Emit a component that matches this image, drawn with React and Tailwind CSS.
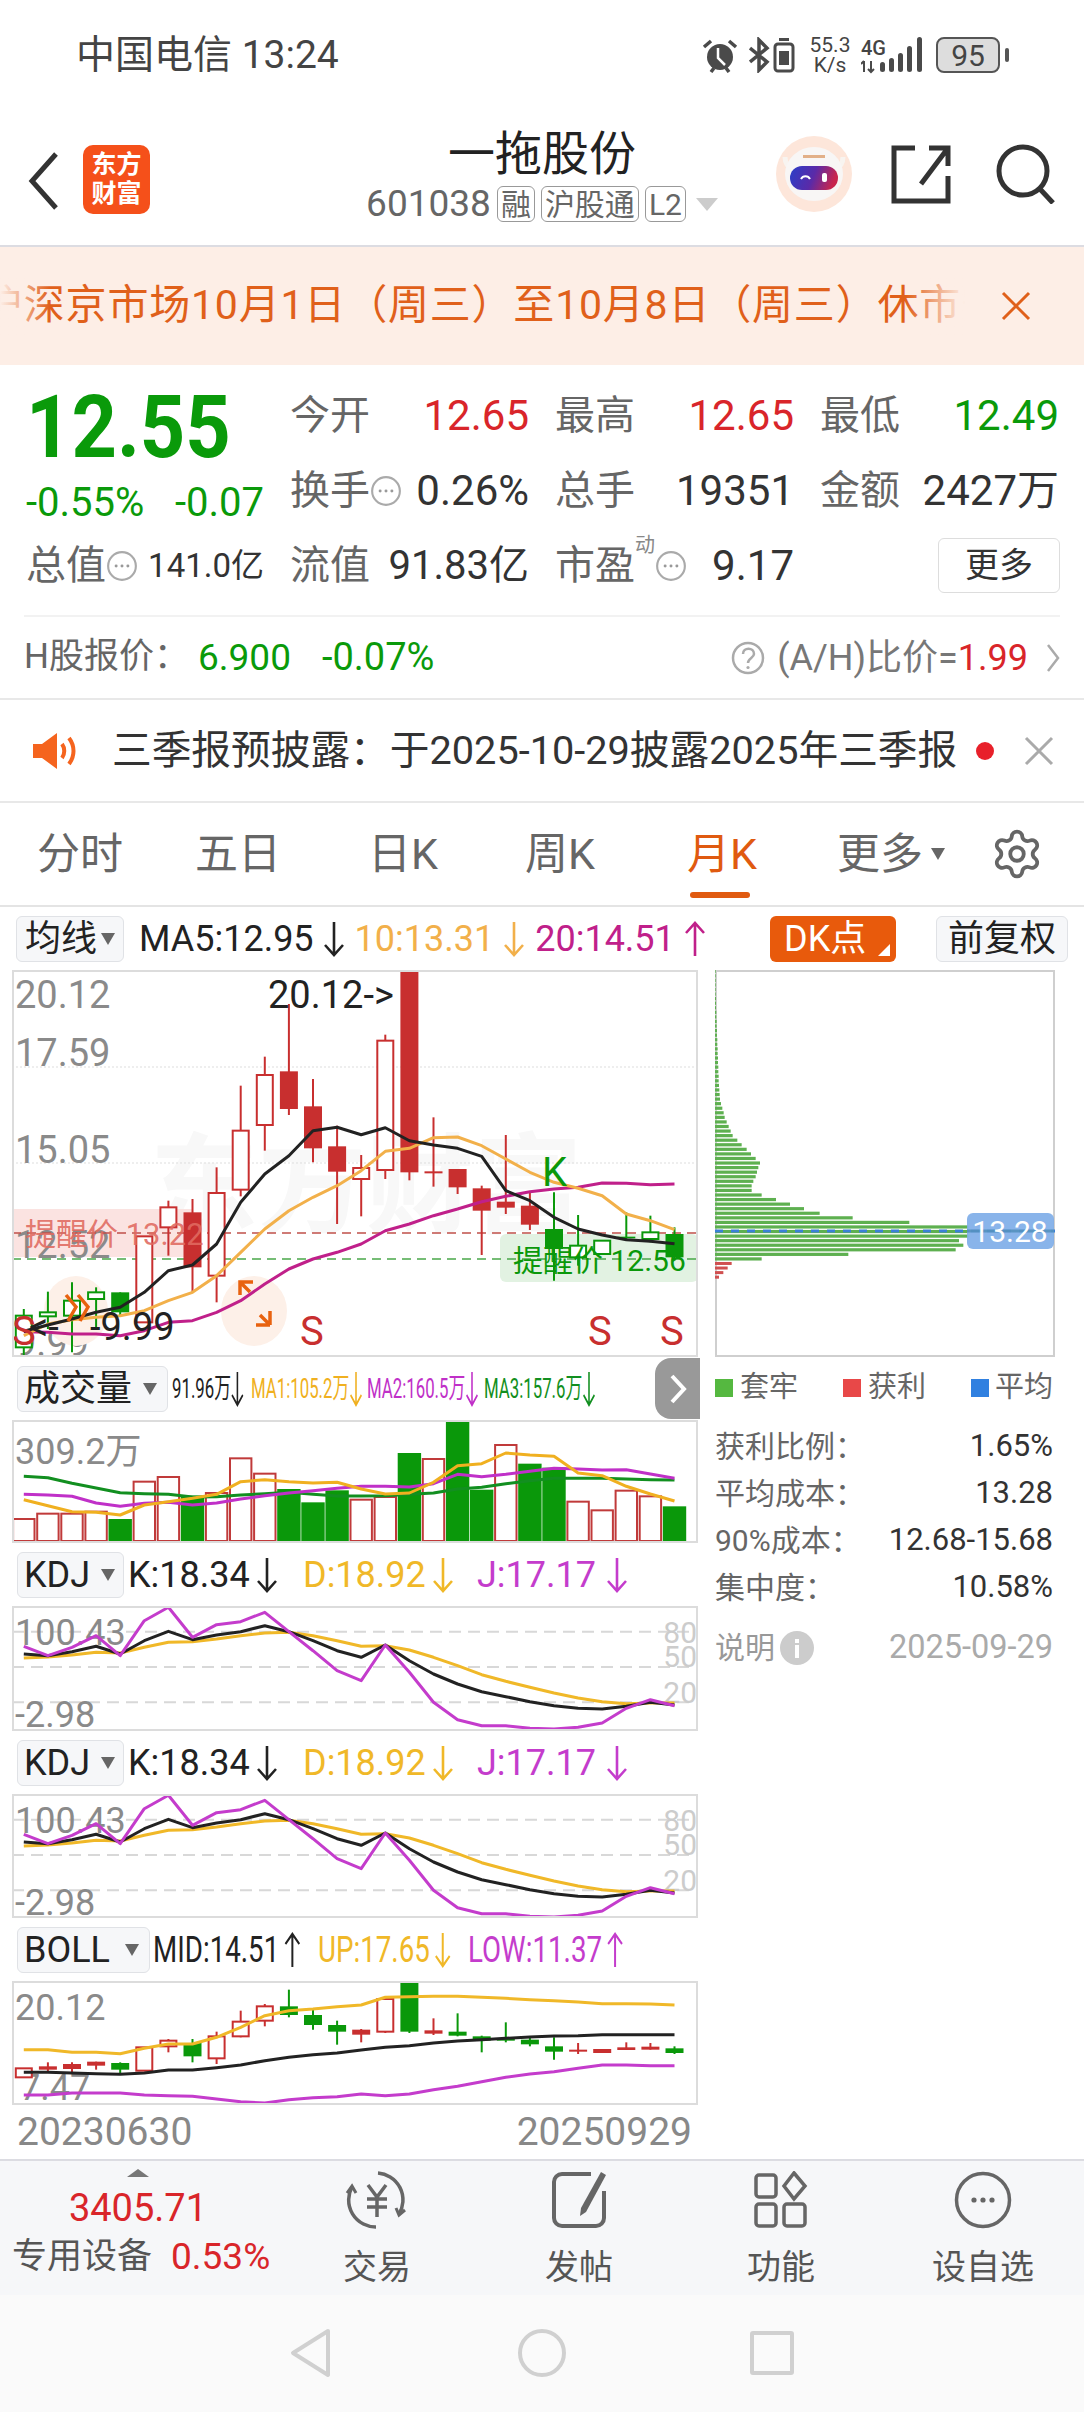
import { Settings } from "lucide-react";

const RED = "#c82f2f";
const GREEN = "#0a980a";

// 蜡烛图 [type, bodyTop, bodyBot, wickTop, wickBot]  h=空心红 r=实心红 g=实心绿 o=空心绿
const mainCandles = [
  ["o", 1250, 1345, 1230, 1370],
  ["o", 1240, 1252, 1178, 1290],
  ["o", 1205, 1250, 1150, 1360],
  ["o", 1180, 1200, 1165, 1290],
  ["g", 1180, 1240, 1180, 1250],
  ["h", 1012, 1270, 1012, 1270],
  ["h", 925, 985, 905, 1070],
  ["r", 940, 1105, 900, 1180],
  ["h", 882, 1130, 805, 1210],
  ["h", 695, 872, 560, 892],
  ["h", 528, 678, 473, 755],
  ["r", 517, 630, 315, 648],
  ["r", 622, 748, 540, 790],
  ["r", 742, 818, 680, 975],
  ["h", 807, 840, 768, 952],
  ["h", 425, 813, 407, 840],
  ["r", 212, 820, 212, 844],
  ["r", 817, 823, 655, 863],
  ["r", 810, 865, 810, 885],
  ["r", 868, 935, 860, 1068],
  ["r", 908, 926, 708, 945],
  ["r", 920, 977, 880, 993],
  ["g", 990, 1050, 880, 1145],
  ["o", 1040, 1075, 948, 1100],
  ["o", 1025, 1065, 1025, 1065],
  ["g", 1013, 1018, 940, 1020],
  ["o", 1000, 1020, 950, 1030],
  ["g", 1005, 1075, 985, 1085],
];
const ma5 = [1297, 1278, 1260, 1240, 1225, 1180, 1115, 1098, 1035, 910, 825, 770, 695, 685, 707, 686, 725, 738, 748, 772, 875, 905, 955, 990, 1008, 1022, 1027, 1034];
const ma10 = [1310, 1275, 1262, 1255, 1250, 1235, 1205, 1180, 1130, 1060, 990, 935, 895, 860, 815, 757, 748, 716, 714, 740, 780, 820, 850, 868, 890, 945, 965, 992];
const ma20 = [1298, 1300, 1305, 1305, 1310, 1295, 1270, 1265, 1240, 1205, 1155, 1110, 1080, 1060, 1035, 995, 975, 950, 930, 908, 892, 878, 870, 865, 852, 853, 857, 855];

const volTops = [510, 494, 494, 488, 510, 398, 384, 440, 432, 328, 374, 420, 460, 424, 452, 444, 312, 330, 214, 422, 288, 344, 356, 458, 484, 425, 442, 472];
const volGreen = [4, 7, 11, 12, 13, 16, 18, 19, 21, 22, 27];
const volMa1 = [452, 470, 488, 490, 498, 468, 458, 448, 436, 398, 392, 398, 402, 400, 420, 435, 432, 400, 350, 344, 312, 318, 322, 372, 380, 412, 435, 456];
const volMa2 = [436, 438, 442, 462, 472, 463, 460, 468, 462, 450, 440, 432, 425, 418, 412, 412, 414, 404, 376, 383, 376, 367, 358, 360, 363, 362, 375, 388];
const volMa3 = [382, 386, 403, 417, 431, 434, 436, 444, 443, 438, 434, 430, 436, 441, 441, 440, 436, 432, 420, 415, 404, 395, 388, 388, 388, 390, 392, 393];

const kdjK = [915, 920, 908, 892, 915, 875, 847, 872, 858, 848, 830, 848, 875, 905, 925, 888, 935, 975, 1005, 1028, 1043, 1058, 1070, 1078, 1080, 1072, 1060, 1068];
const kdjD = [927, 924, 918, 910, 912, 895, 880, 878, 870, 860, 852, 850, 860, 875, 892, 890, 903, 925, 950, 977, 997, 1015, 1032, 1047, 1058, 1064, 1062, 1062];
const kdjJ = [892, 920, 895, 860, 920, 815, 775, 865, 827, 818, 790, 848, 905, 965, 995, 888, 970, 1060, 1112, 1130, 1130, 1138, 1140, 1135, 1122, 1078, 1052, 1070];

const bollCandles = [
  ["h", 1018, 1045, 1018, 1045],
  ["r", 1012, 1022, 1000, 1030],
  ["r", 1005, 1020, 1000, 1035],
  ["r", 998, 1010, 998, 1022],
  ["g", 1002, 1022, 1000, 1035],
  ["h", 955, 1025, 955, 1025],
  ["h", 935, 952, 930, 970],
  ["g", 942, 982, 930, 1000],
  ["h", 922, 988, 908, 1005],
  ["h", 878, 922, 845, 925],
  ["h", 832, 875, 825, 892],
  ["g", 832, 858, 782, 865],
  ["g", 858, 888, 838, 902],
  ["g", 888, 908, 875, 947],
  ["r", 902, 917, 900, 940],
  ["h", 810, 908, 805, 912],
  ["g", 757, 908, 757, 912],
  ["r", 904, 914, 868, 918],
  ["g", 908, 920, 853, 922],
  ["g", 922, 935, 920, 970],
  ["g", 928, 935, 880, 940],
  ["g", 932, 946, 925, 952],
  ["g", 952, 968, 925, 992],
  ["r", 962, 968, 942, 975],
  ["r", 960, 972, 960, 972],
  ["r", 955, 963, 940, 963],
  ["r", 953, 962, 942, 962],
  ["g", 958, 972, 952, 975],
];
const bollUp = [962, 962, 970, 970, 974, 958, 945, 945, 925, 895, 860, 845, 840, 833, 828, 805, 803, 802, 802, 805, 808, 812, 815, 819, 824, 824, 825, 828];
const bollMid = [1030, 1030, 1032, 1034, 1036, 1032, 1023, 1023, 1016, 1008, 995, 985, 977, 972, 963, 955, 950, 942, 936, 932, 928, 924, 921, 920, 917, 917, 917, 917];
const bollLow = [1098, 1098, 1092, 1092, 1092, 1098, 1100, 1102, 1110, 1118, 1122, 1112, 1106, 1103, 1095, 1100, 1095, 1082, 1072, 1058, 1045, 1035, 1028, 1018, 1008, 1008, 1010, 1010];

// 筹码分布, 从下往上 [宽度]
const chipRed = [12, 25, 38, 50];
const chipGreen = [140, 400, 722, 745, 732, 760, 760, 760, 583, 413, 314, 267, 225, 183, 140, 110, 110, 115, 122, 126, 130, 135, 122, 108, 95, 80, 67, 53, 47, 41, 35, 29, 26, 22, 18, 15, 14, 13, 12, 11, 11, 10, 10, 9, 9, 8, 8, 7, 7, 6, 6, 5, 5, 4, 4, 3, 3, 3, 2, 2, 2, 2, 2, 2, 2];

const cx = (i) => 23.8 + 24.1 * i;
const pts = (vals, base) => vals.map((v, i) => `${cx(i).toFixed(1)},${(base + v / 3).toFixed(1)}`).join(" ");

function Line({ vals, base, color, w = 3 }) {
  return <polyline points={pts(vals, base)} fill="none" stroke={color} strokeWidth={w} strokeLinejoin="round" />;
}

function Candles({ data, base, bw = 18 }) {
  return data.map(([t, a, b, c, d], i) => {
    const color = t === "h" || t === "r" ? RED : GREEN;
    const hollow = t === "h" || t === "o";
    const x = cx(i);
    const top = base + a / 3;
    const bot = base + b / 3;
    return (
      <g key={i}>
        <line x1={x} x2={x} y1={base + c / 3} y2={base + d / 3} stroke={color} strokeWidth="2" />
        <rect
          x={x - bw / 2 + (hollow ? 1 : 0)}
          y={top}
          width={bw - (hollow ? 2 : 0)}
          height={bot - top}
          fill={hollow ? "#fff" : color}
          stroke={hollow ? color : "none"}
          strokeWidth="2"
        />
      </g>
    );
  });
}

function Frame({ x = 12, y, w = 686, h, stroke = "#dcdcdc" }) {
  return <rect x={x + 1} y={y + 1} width={w - 2} height={h - 2} fill="none" stroke={stroke} strokeWidth="2" />;
}

function MainChart() {
  const T = (p) => <text fontSize="38" fill="#8a8a8a" {...p} />;
  return (
    <svg width="686" height="387" viewBox="12 971 686 387" className="block">
      <text x="150" y="1225" fontSize="108" fontWeight="700" fill="#f8f8f8">东方财富</text>
      <line x1="12" x2="698" y1="1068" y2="1068" stroke="#ddd" strokeWidth="1" strokeDasharray="2 2" />
      <line x1="12" x2="698" y1="1164" y2="1164" stroke="#ddd" strokeWidth="1" strokeDasharray="2 2" />
      <rect x="12" y="1210" width="180" height="48" fill="#fbe3e1" />
      <rect x="500" y="1235" width="198" height="48" rx="6" fill="#e2f2e2" />
      <T x="15" y="1009">20.12</T>
      <T x="15" y="1067">17.59</T>
      <T x="15" y="1164">15.05</T>
      <T x="15" y="1259">12.52</T>
      <T x="15" y="1357">9.99</T>
      <line x1="12" x2="698" y1="1234" y2="1234" stroke="#c0504a" strokeWidth="1.5" strokeDasharray="9 6" />
      <line x1="12" x2="698" y1="1260" y2="1260" stroke="#4aa84a" strokeWidth="1.5" strokeDasharray="9 6" />
      <ellipse cx="76" cy="1312" rx="32" ry="35" fill="#fdf0e8" />
      <ellipse cx="254" cy="1312" rx="33" ry="35" fill="#fdf0e8" />
      <Candles data={mainCandles} base={900} />
      <text x="25" y="1246" fontSize="31" fill="#e06a60" fillOpacity="0.9">提醒价 13.22</text>
      <text x="513" y="1272" fontSize="30" fill={GREEN}>提醒价 12.56</text>
      <Line vals={ma20} base={900} color="#c0208a" />
      <Line vals={ma10} base={900} color="#f2b04a" />
      <Line vals={ma5} base={900} color="#222" />
      <path d="M66 1298 l10 12 l-8 14 M78 1298 l10 12 l-8 14" transform="translate(0 -2)" fill="none" stroke="#e8620f" strokeWidth="3.5" />
      <path d="M240 1296 v-13 h13 M240 1283 l10 10 M270 1326 h-14 M270 1326 v-14 M270 1326 l-10 -10" fill="none" stroke="#e8620f" strokeWidth="3.5" />
      <text x="268" y="1009" fontSize="38" fill="#222">20.12-&gt;</text>
      <text x="29" y="1341" fontSize="38" fill="#222">&lt;-<tspan x="90">-9.99</tspan></text>
      <text x="542" y="1187" fontSize="40" fill={GREEN}>K</text>
      {[[12, 1346], [300, 1346], [588, 1346], [660, 1346]].map(([x, y]) => (
        <text key={x} x={x} y={y} fontSize="40" fill={RED}>S</text>
      ))}
      <Frame y={971} h={387} />
    </svg>
  );
}

function VolChart() {
  return (
    <svg width="686" height="123" viewBox="12 1421 686 123" className="block">
      {volTops.map((v, i) => {
        const x = cx(i) - 11.7;
        const y = 1350 + v / 3;
        const h = 1543 - y;
        return volGreen.includes(i) ? (
          <rect key={i} x={x} y={y} width="23.4" height={h} fill={GREEN} />
        ) : (
          <rect key={i} x={x + 1} y={y} width="21.4" height={h - 1} fill="#fff" stroke="#c03a3a" strokeWidth="2" />
        );
      })}
      <text x="15" y="1465" fontSize="36" fill="#8a8a8a">309.2万</text>
      <Line vals={volMa3} base={1350} color="#128f20" />
      <Line vals={volMa2} base={1350} color="#c030c8" />
      <Line vals={volMa1} base={1350} color="#f0b020" />
      <Frame y={1421} h={123} />
    </svg>
  );
}

function KdjChart({ top, h }) {
  // top 为框线上沿, 数据基于第一张KDJ的坐标
  const base = top - 1607 + 1350;
  const Y = (v) => base + v / 3;
  return (
    <svg width="686" height={h} viewBox={`12 ${top} 686 ${h}`} className="block">
      {[848, 954, 1060].map((v) => (
        <line key={v} x1="12" x2="698" y1={Y(v)} y2={Y(v)} stroke="#d8d8d8" strokeWidth="2" strokeDasharray="12 7" />
      ))}
      <text x="15" y={Y(850) + 13} fontSize="36" fill="#8a8a8a">100.43</text>
      <text x="15" y={Y(1095) + 13} fontSize="36" fill="#8a8a8a">-2.98</text>
      <text x="697" y={Y(848) + 11} fontSize="30" fill="#ccc" textAnchor="end">80</text>
      <text x="697" y={Y(922) + 11} fontSize="30" fill="#ccc" textAnchor="end">50</text>
      <text x="697" y={Y(1030) + 11} fontSize="30" fill="#ccc" textAnchor="end">20</text>
      <Line vals={kdjD} base={base} color="#f0b828" />
      <Line vals={kdjK} base={base} color="#222" />
      <Line vals={kdjJ} base={base} color="#c43ccc" />
      <Frame y={top} h={h} />
    </svg>
  );
}

function BollChart() {
  return (
    <svg width="686" height="124" viewBox="12 1982 686 124" className="block">
      <text x="15" y="2021" fontSize="36" fill="#8a8a8a">20.12</text>
      <text x="20" y="2101" fontSize="36" fill="#8a8a8a">7.47</text>
      <Candles data={bollCandles} base={1730} />
      <Line vals={bollUp} base={1730} color="#f0b828" />
      <Line vals={bollMid} base={1730} color="#222" />
      <Line vals={bollLow} base={1730} color="#c43ccc" />
      <Frame y={1982} h={124} />
    </svg>
  );
}

function ChipChart() {
  return (
    <svg width="340" height="387" viewBox="715 971 340 387" className="block">
      <Frame x={715} y={971} w={340} h={387} stroke="#cfcfcf" />
      {chipRed.map((w, i) => (
        <rect key={i} x="715" y={900 + (1130 - i * 13.7) / 3} width={w / 3} height="3" fill="#d05050" />
      ))}
      {chipGreen.map((w, i) => (
        <rect key={i} x="715" y={900 + (1075 - i * 13.7) / 3} width={w / 3} height="3.2" fill="#5eb050" />
      ))}
      <line x1="715" x2="1055" y1="1232" y2="1232" stroke="#3a80d8" strokeWidth="3" strokeDasharray="8 8" />
      <rect x="967" y="1214" width="87" height="36" rx="6" fill="#7faee8" fillOpacity="0.92" />
      <line x1="967" x2="1054" y1="1232" y2="1232" stroke="#3a80a8" strokeWidth="3" opacity="0.6" />
      <text x="1010" y="1243" fontSize="30" fill="#fff" textAnchor="middle">13.28</text>
    </svg>
  );
}

function Arrow({ color = "#222", up = false, className = "" }) {
  return (
    <svg width="22" height="38" viewBox="0 0 22 38" className={`shrink-0 ${className}`}>
      <path
        d={up ? "M11 36V3M2 13l9-10 9 10" : "M11 2v33M2 25l9 10 9-10"}
        fill="none"
        stroke={color}
        strokeWidth="2.6"
      />
    </svg>
  );
}

function DropBtn({ label, className }) {
  return (
    <div className={`flex items-center h-[46px] rounded-md border border-[#e0e2e6] bg-[#f6f7f9] text-[36px] text-[#222] shrink-0 ${className}`}>
      <span className="leading-none">{label}</span>
      <span className="ml-auto w-0 h-0 border-x-[7px] border-x-transparent border-t-[12px] border-t-[#666]" />
    </div>
  );
}

function KdjHeader() {
  return (
    <div className="flex items-center h-[63px] text-[36px] whitespace-nowrap">
      <DropBtn label="KDJ" className="ml-[5px] w-[107px] pl-[6px] pr-[8px]" />
      <div className="ml-[4px] flex items-center w-[175px] text-[#222]">K:18.34<Arrow className="ml-[6px]" /></div>
      <div className="flex items-center w-[174px] text-[#f0b828]">D:18.92<Arrow color="#f0b828" className="ml-[6px]" /></div>
      <div className="flex items-center text-[#c43ccc]">J:17.17<Arrow color="#c43ccc" className="ml-[10px]" /></div>
    </div>
  );
}

// 压窄的小字
function Squeezed({ width, color, children, scale = "scale-x-[0.6]" }) {
  return (
    <div className={`flex items-center shrink-0 origin-left ${scale} ${width}`} style={{ color }}>
      {children}
    </div>
  );
}

function MoreDot({ size = 32 }) {
  return (
    <svg width={size} height={size} viewBox="0 0 30 30" className="shrink-0">
      <circle cx="15" cy="15" r="13" fill="none" stroke="#aaa" strokeWidth="2" />
      <circle cx="9.5" cy="15" r="1.4" fill="#999" />
      <circle cx="15" cy="15" r="1.4" fill="#999" />
      <circle cx="20.5" cy="15" r="1.4" fill="#999" />
    </svg>
  );
}

function Stat({ label, value, color = "#333", dot, size = "text-[42px]" }) {
  return (
    <div className="flex items-center w-[239px] h-[75px] text-[40px] whitespace-nowrap">
      <span className="text-[#666]">{label}</span>
      {dot}
      <span className={`ml-auto ${size}`} style={{ color }}>{value}</span>
    </div>
  );
}

function StatusBar() {
  return (
    <div className="h-[110px] shrink-0 flex items-center pl-[76px] pr-[75px] text-[#444]">
      <span className="text-[39px]">中国电信 13:24</span>
      <div className="ml-auto flex items-center h-[40px]">
        <svg width="36" height="36" viewBox="0 0 36 36">
          <circle cx="18" cy="20" r="13" fill="#4a4a4a" />
          <path d="M16 11v10l7 7" fill="none" stroke="#fff" strokeWidth="2.5" />
          <path d="M2 10l7-6M34 10l-7-6M9 35l3-4M27 35l-3-4" stroke="#4a4a4a" strokeWidth="3.5" />
        </svg>
        <svg width="46" height="36" viewBox="0 0 46 36" className="ml-[11px]">
          <path d="M1 11l17 14-8 8V3l8 8L1 25" fill="none" stroke="#4a4a4a" strokeWidth="3.5" />
          <rect x="26" y="7" width="18" height="27" rx="3" fill="none" stroke="#4a4a4a" strokeWidth="3" />
          <rect x="30" y="14" width="10" height="14" fill="#4a4a4a" />
          <rect x="30" y="1" width="10" height="3" fill="#4a4a4a" />
        </svg>
        <div className="ml-[14px] w-[42px] text-[21px] leading-[20px] text-center whitespace-nowrap">55.3<br />K/s</div>
        <div className="ml-[10px] relative w-[62px] h-[38px]">
          <span className="absolute left-0 top-[-3px] text-[20px] font-medium">4G</span>
          <svg width="62" height="38" viewBox="0 0 62 38" className="absolute left-0 top-0">
            <path d="M3 36V25M0 28l3-3M10 25v11M7 33l3 3 3-3" stroke="#4a4a4a" strokeWidth="2" fill="none" />
            <rect x="19" y="26" width="5" height="10" rx="2.5" fill="#4a4a4a" />
            <rect x="28" y="22" width="5" height="14" rx="2.5" fill="#4a4a4a" />
            <rect x="37" y="17" width="5" height="19" rx="2.5" fill="#4a4a4a" />
            <rect x="46" y="10" width="5" height="26" rx="2.5" fill="#4a4a4a" />
            <rect x="56" y="1" width="5" height="35" rx="2.5" fill="#4a4a4a" />
          </svg>
        </div>
        <div className="ml-[13px] w-[64px] h-[36px] rounded-lg border-2 border-[#555] bg-[#ddd] flex items-center justify-center text-[30px]">95</div>
        <div className="ml-[5px] w-[4px] h-[14px] rounded-sm bg-[#555]" />
      </div>
    </div>
  );
}

function TitleBar() {
  return (
    <div className="h-[137px] shrink-0 border-b-2 border-[#dcdce2] flex relative">
      <svg width="32" height="60" viewBox="0 0 32 60" className="ml-[27px] mt-[41px]">
        <path d="M29 3L5 30l24 27" fill="none" stroke="#333" strokeWidth="5" />
      </svg>
      <div className="ml-[24px] mt-[35px] w-[67px] h-[69px] rounded-[10px] bg-[#f5501a] text-white text-[25px] leading-[29px] font-bold text-center pt-[5px]">
        东方<br />财富
      </div>
      <div className="absolute left-0 right-0 top-[14px] flex flex-col items-center">
        <div className="text-[47px] leading-[60px] text-[#222]">一拖股份</div>
        <div className="flex items-center h-[36px] mt-[2px] text-[#666]">
          <span className="text-[37px] mr-[6px]">601038</span>
          {["融", "沪股通", "L2"].map((t) => (
            <span key={t} className="mr-[6px] px-[3px] h-[36px] flex items-center text-[30px] border border-[#999] rounded-md">{t}</span>
          ))}
          <span className="ml-[4px] w-0 h-0 border-x-[11px] border-x-transparent border-t-[13px] border-t-[#ccc]" />
        </div>
      </div>
      <div className="ml-auto flex items-center pr-[28px] pb-[8px]">
        <svg width="76" height="76" viewBox="0 0 76 76">
          <defs>
            <linearGradient id="visor" x1="0" y1="0" x2="1" y2="0.2">
              <stop offset="0" stopColor="#2a3fc8" />
              <stop offset="0.55" stopColor="#5a2aa8" />
              <stop offset="1" stopColor="#c8254e" />
            </linearGradient>
          </defs>
          <circle cx="38" cy="38" r="38" fill="#fde6da" />
          <path d="M9 21c0 7 4 11 9 13M67 21c0 7-4 11-9 13" fill="none" stroke="#f8f4f0" strokeWidth="5" />
          <ellipse cx="38" cy="38" rx="29" ry="27" fill="#f8f6f5" />
          <rect x="27" y="19" width="22" height="3" fill="#e2b088" />
          <rect x="14" y="30" width="48" height="24" rx="12" fill="url(#visor)" />
          <path d="M25 43a5 5 0 0 1 9 0" fill="none" stroke="#fff" strokeWidth="2" />
          <rect x="46" y="37" width="5" height="9" rx="2" fill="#fff" />
        </svg>
        <svg width="60" height="60" viewBox="0 0 60 60" className="ml-[39px]">
          <path d="M24 4H3v53h54V32M57 22V4H38M57 4L30 40" fill="none" stroke="#333" strokeWidth="5" />
        </svg>
        <svg width="60" height="60" viewBox="0 0 60 60" className="ml-[45px]">
          <circle cx="27" cy="27" r="24" fill="none" stroke="#333" strokeWidth="5" />
          <path d="M44 45l13 14" stroke="#333" strokeWidth="5" />
        </svg>
      </div>
    </div>
  );
}

function Notice() {
  return (
    <div className="h-[118px] shrink-0 bg-[#fdeee6] flex items-center text-[#e0601a]">
      <div className="relative w-[965px] overflow-hidden whitespace-nowrap text-[41px] tracking-[0.8px]">
        <span className="block ml-[-18px]">沪深京市场10月1日（周三）至10月8日（周三）休市安排</span>
        <div className="absolute left-0 top-0 bottom-0 w-[50px] bg-linear-to-r from-[#fdeee6] to-transparent" />
        <div className="absolute right-0 top-0 bottom-0 w-[60px] bg-linear-to-l from-[#fdeee6] to-transparent" />
      </div>
      <svg width="30" height="30" viewBox="0 0 30 30" className="ml-[36px]">
        <path d="M2 2l26 26M28 2L2 28" stroke="#e0601a" strokeWidth="3" />
      </svg>
    </div>
  );
}

function Quote() {
  return (
    <div className="h-[250px] shrink-0 pt-[13px] grid grid-cols-[290px_265px_265px_264px] grid-rows-[75px_75px_75px]">
      <div className="row-span-2 pl-[26px] flex flex-col">
        <div className="text-[88px] leading-[98px] font-bold text-[#0a9a0a] h-[98px] origin-left scale-x-[0.9]">12.55</div>
        <div className="text-[40px] leading-[54px] text-[#0a9a0a] flex w-[238px] justify-between">
          <span>-0.55%</span>
          <span>-0.07</span>
        </div>
      </div>
      <Stat label="今开" value="12.65" color="#d9252a" />
      <Stat label="最高" value="12.65" color="#d9252a" />
      <Stat label="最低" value="12.49" color="#0a9a0a" />
      <Stat label="换手" value="0.26%" dot={<MoreDot />} />
      <Stat label="总手" value="19351" />
      <Stat label="金额" value="2427万" />
      <div className="pl-[26px] pr-[26px] flex items-center text-[40px] text-[#666]">
        <span>总值</span>
        <MoreDot />
        <span className="ml-auto text-[33px] text-[#333] whitespace-nowrap">141.0亿</span>
      </div>
      <Stat label="流值" value="91.83亿" size="text-[40px]" />
      <div className="flex items-center w-[239px] h-[75px] text-[40px]">
        <span className="text-[#666]">市盈</span>
        <span className="text-[20px] text-[#888] self-start mt-[2px]">动</span>
        <MoreDot />
        <span className="ml-auto text-[#333] text-[42px]">9.17</span>
      </div>
      <div className="flex items-center justify-end w-[240px]">
        <div className="w-[122px] h-[55px] border border-[#ddd] rounded-md flex items-center justify-center text-[34px] text-[#333]">更多</div>
      </div>
    </div>
  );
}

function HShare() {
  return (
    <div className="h-[83px] shrink-0 mx-[24px] border-t-2 border-[#f2f2f2] flex items-center text-[38px]">
      <span className="text-[#666] w-[174px] text-[35px] whitespace-nowrap">H股报价：</span>
      <span className="text-[#0a9a0a] text-[37px]">6.900</span>
      <span className="text-[#0a9a0a] ml-[31px]">-0.07%</span>
      <div className="ml-auto flex items-center text-[36px]">
        <svg width="34" height="34" viewBox="0 0 34 34">
          <circle cx="17" cy="17" r="15" fill="none" stroke="#aaa" strokeWidth="2.5" />
          <path d="M12 13c0-7 11-7 11 0 0 4-6 4-6 9" fill="none" stroke="#aaa" strokeWidth="2.5" />
          <circle cx="17" cy="26.5" r="1.6" fill="#aaa" />
        </svg>
        <span className="ml-[12px] text-[#777]">(A/H)比价=</span>
        <span className="text-[#d9252a]">1.99</span>
        <svg width="14" height="32" viewBox="0 0 14 32" className="ml-[18px]">
          <path d="M2 3l10 13L2 29" fill="none" stroke="#aaa" strokeWidth="2.5" />
        </svg>
      </div>
    </div>
  );
}

function Announce() {
  return (
    <div className="h-[105px] shrink-0 border-y-2 border-[#e8e8e8] flex items-center pl-[33px]">
      <svg width="46" height="38" viewBox="0 0 46 38">
        <path d="M0 12h9L24 1v36L9 26H0z" fill="#f5641e" />
        <path d="M29 12c3 4 3 10 0 14" fill="none" stroke="#f5641e" strokeWidth="4" />
        <path d="M36 6c6 8 6 18 0 26" fill="none" stroke="#f5641e" strokeWidth="4" />
      </svg>
      <span className="ml-[33px] text-[39.7px] text-[#333] whitespace-nowrap">三季报预披露：于2025-10-29披露2025年三季报</span>
      <span className="ml-auto mr-[30px] w-[18px] h-[18px] rounded-full bg-[#e8202a]" />
      <svg width="30" height="30" viewBox="0 0 30 30" className="mr-[30px]">
        <path d="M2 2l26 26M28 2L2 28" stroke="#aaa" strokeWidth="3" />
      </svg>
    </div>
  );
}

function Tabs() {
  const tab = "flex justify-center text-[43px] shrink-0";
  return (
    <div className="h-[104px] shrink-0 border-b-2 border-[#e4e4e4] flex items-center">
      <div className={`${tab} w-[160px] text-[#666]`}>分时</div>
      <div className={`${tab} w-[156px] text-[#666]`}>五日</div>
      <div className={`${tab} w-[174px] text-[#666]`}>日K</div>
      <div className={`${tab} w-[140px] text-[#666]`}>周K</div>
      <div className={`${tab} w-[184px] relative text-[#e05a10]`}>
        月K
        <span className="absolute left-[60px] bottom-[-12px] w-[60px] h-[6px] rounded-full bg-[#e05a10]" />
      </div>
      <div className="flex items-center text-[43px] text-[#666] ml-[23px]">
        更多
        <span className="ml-[8px] w-0 h-0 border-x-[7px] border-x-transparent border-t-[12px] border-t-[#666]" />
      </div>
      <Settings size={54} strokeWidth={1.7} color="#666" className="ml-[45px]" />
    </div>
  );
}

function BottomBar() {
  const item = "w-[202px] flex flex-col items-center shrink-0";
  const label = "text-[34px] leading-[40px] text-[#555] mt-[18px]";
  return (
    <div className="h-[136px] shrink-0 bg-[#f6f7f9] border-t-2 border-[#dcdce2] flex">
      <div className="w-[276px] flex flex-col items-center shrink-0">
        <span className="mt-[8px] w-0 h-0 border-x-[11px] border-x-transparent border-b-[8px] border-b-[#777]" />
        <span className="text-[38px] leading-[46px] text-[#d9252a] mt-[8px]">3405.71</span>
        <div className="flex items-center w-full pl-[12px] mt-[4px]">
          <span className="text-[35px] leading-[44px] text-[#555] whitespace-nowrap">专用设备</span>
          <span className="text-[37px] leading-[44px] text-[#d9252a] ml-[19px]">0.53%</span>
        </div>
      </div>
      <div className={item}>
        <svg width="66" height="58" viewBox="0 0 66 58" className="mt-[10px]">
          <path d="M34 2a27 27 0 0 1 21 41M32 56A27 27 0 0 1 8 16" fill="none" stroke="#666" strokeWidth="3.5" />
          <path d="M3 22l5-7 4 7M52 37l3 7 6-5" fill="none" stroke="#666" strokeWidth="3" />
          <path d="M24 14l9 12 9-12M33 26v20M23 28h20M23 36h20" fill="none" stroke="#666" strokeWidth="3.5" />
        </svg>
        <span className={label}>交易</span>
      </div>
      <div className={item}>
        <svg width="56" height="58" viewBox="0 0 56 58" className="mt-[10px]">
          <path d="M40 3H11a8 8 0 0 0-8 8v36a8 8 0 0 0 8 8h34a8 8 0 0 0 8-8V20" fill="none" stroke="#666" strokeWidth="4" />
          <path d="M50 1l5 3-20 37-6 4 1-8z" fill="#666" />
        </svg>
        <span className={label}>发帖</span>
      </div>
      <div className={item}>
        <svg width="54" height="58" viewBox="0 0 54 58" className="mt-[10px]">
          <rect x="2" y="4" width="20" height="22" rx="3" fill="none" stroke="#666" strokeWidth="3.5" />
          <rect x="2" y="33" width="20" height="22" rx="3" fill="none" stroke="#666" strokeWidth="3.5" />
          <rect x="30" y="33" width="21" height="22" rx="3" fill="none" stroke="#666" strokeWidth="3.5" />
          <path d="M40 2l11 13-11 13-10-13z" fill="none" stroke="#666" strokeWidth="3.5" />
        </svg>
        <span className={label}>功能</span>
      </div>
      <div className={item}>
        <svg width="58" height="58" viewBox="0 0 58 58" className="mt-[10px]">
          <circle cx="29" cy="29" r="26.5" fill="none" stroke="#666" strokeWidth="3.5" />
          <circle cx="20" cy="29" r="2.6" fill="#666" />
          <circle cx="29" cy="29" r="2.6" fill="#666" />
          <circle cx="38" cy="29" r="2.6" fill="#666" />
        </svg>
        <span className={label}>设自选</span>
      </div>
    </div>
  );
}

function NavBar() {
  return (
    <div className="flex-1 bg-[#fafafa] flex items-center pb-[2px]">
      <svg width="42" height="50" viewBox="0 0 42 50" className="ml-[290px]">
        <path d="M38 3L3 25l35 22z" fill="none" stroke="#d0d0d0" strokeWidth="4" strokeLinejoin="round" />
      </svg>
      <div className="ml-[186px] w-[48px] h-[48px] rounded-full border-4 border-[#d0d0d0]" />
      <div className="ml-[184px] w-[44px] h-[44px] rounded-[3px] border-4 border-[#d0d0d0]" />
    </div>
  );
}

export default function App() {
  return (
    <div className="w-[1084px] h-[2412px] bg-white overflow-hidden flex flex-col font-['Roboto','Noto_Sans_CJK_SC',sans-serif]">
      <StatusBar />
      <TitleBar />
      <Notice />
      <Quote />
      <HShare />
      <Announce />
      <Tabs />

      {/* 均线 + 按钮 */}
      <div className="h-[63px] shrink-0 flex items-center text-[36px] whitespace-nowrap">
        <DropBtn label="均线" className="ml-[16px] w-[108px] pl-[8px] pr-[8px]" />
        <span className="ml-[15px] text-[#222]">MA5:12.95</span>
        <Arrow className="ml-[9px]" />
        <span className="ml-[10px] text-[#f2b04a]">10:13.31</span>
        <Arrow color="#f2b04a" className="ml-[9px]" />
        <span className="ml-[10px] text-[#c0208a]">20:14.51</span>
        <Arrow up color="#c0208a" className="ml-[9px]" />
        <div className="relative ml-auto w-[126px] h-[46px] rounded-md bg-[#e85a0c] text-white flex items-center pl-[14px]">
          DK点
          <span className="absolute right-[6px] bottom-[6px] w-0 h-0 border-l-[12px] border-l-transparent border-b-[12px] border-b-white" />
        </div>
        <div className="ml-[40px] mr-[16px] w-[132px] h-[46px] rounded-md border border-[#e0e2e6] bg-[#f6f7f9] flex items-center justify-center text-[#222]">前复权</div>
      </div>

      <div className="flex shrink-0">
        {/* 左边 K线 + 指标 */}
        <div className="w-[700px] pl-[12px] shrink-0">
          <MainChart />
          <div className="relative flex items-center h-[63px] whitespace-nowrap">
            <DropBtn label="成交量" className="ml-[5px] w-[151px] pl-[6px] pr-[10px]" />
            <div className="ml-[4px] flex items-center text-[28px]">
              <Squeezed width="w-[79px]" color="#222">91.96万<Arrow /></Squeezed>
              <Squeezed width="w-[116px]" color="#f0b020">MA1:105.2万<Arrow color="#f0b020" /></Squeezed>
              <Squeezed width="w-[117px]" color="#c030c8">MA2:160.5万<Arrow color="#c030c8" /></Squeezed>
              <Squeezed width="w-[110px]" color="#128f20">MA3:157.6万<Arrow color="#128f20" /></Squeezed>
            </div>
            <div className="absolute left-[643px] top-[1px] w-[45px] h-[61px] rounded-l-2xl bg-[#999] flex items-center justify-center">
              <svg width="18" height="32" viewBox="0 0 18 32">
                <path d="M3 3l12 13L3 29" fill="none" stroke="#fff" strokeWidth="4" />
              </svg>
            </div>
          </div>
          <VolChart />
          <KdjHeader />
          <KdjChart top={1607} h={125} />
          <KdjHeader />
          <KdjChart top={1795} h={124} />
          <div className="flex items-center h-[63px] text-[36px] whitespace-nowrap">
            <DropBtn label="BOLL" className="ml-[5px] w-[133px] pl-[6px] pr-[10px]" />
            <div className="ml-[3px] flex items-center">
              <Squeezed width="w-[165px]" color="#222" scale="scale-x-[0.77]">MID:14.51<Arrow up className="ml-[6px]" /></Squeezed>
              <Squeezed width="w-[150px]" color="#f0b828" scale="scale-x-[0.77]">UP:17.65<Arrow color="#f0b828" className="ml-[6px]" /></Squeezed>
              <Squeezed width="w-[160px]" color="#c43ccc" scale="scale-x-[0.77]">LOW:11.37<Arrow up color="#c43ccc" className="ml-[6px]" /></Squeezed>
            </div>
          </div>
          <BollChart />
        </div>

        {/* 右边 筹码 */}
        <div className="ml-[15px] w-[340px] shrink-0">
          <ChipChart />
          <div className="flex items-center mt-[20px] text-[29px] text-[#666] h-[22px]">
            <span className="w-[18px] h-[18px] bg-[#55b840]" />
            <span className="ml-[7px] w-[103px]">套牢</span>
            <span className="w-[18px] h-[18px] bg-[#e84848]" />
            <span className="ml-[7px] w-[103px]">获利</span>
            <span className="w-[18px] h-[18px] bg-[#3080e0]" />
            <span className="ml-[6px]">平均</span>
          </div>
          <div className="mt-[24px] text-[30px] text-[#666] pr-[2px]">
            {[
              ["获利比例：", "1.65%"],
              ["平均成本：", "13.28"],
              ["90%成本：", "12.68-15.68"],
              ["集中度：", "10.58%"],
            ].map(([k, v]) => (
              <div key={k} className="flex justify-between h-[47px] items-center">
                <span>{k}</span>
                <span className="text-[#333] text-[31px]">{v}</span>
              </div>
            ))}
            <div className="flex items-center h-[47px] mt-[13px] text-[#999]">
              <span>说明</span>
              <svg width="36" height="36" viewBox="0 0 36 36" className="ml-[4px]">
                <circle cx="18" cy="18" r="17" fill="#ccc" />
                <rect x="16" y="15" width="4" height="13" fill="#fff" />
                <rect x="16" y="9" width="4" height="4" fill="#fff" />
              </svg>
              <span className="ml-auto text-[#aaa] text-[32.5px]">2025-09-29</span>
            </div>
          </div>
        </div>
      </div>

      <div className="h-[54px] shrink-0 flex items-center justify-between w-[692px] pl-[17px] text-[39px] text-[#888]">
        <span>20230630</span>
        <span>20250929</span>
      </div>
      <BottomBar />
      <NavBar />
    </div>
  );
}
